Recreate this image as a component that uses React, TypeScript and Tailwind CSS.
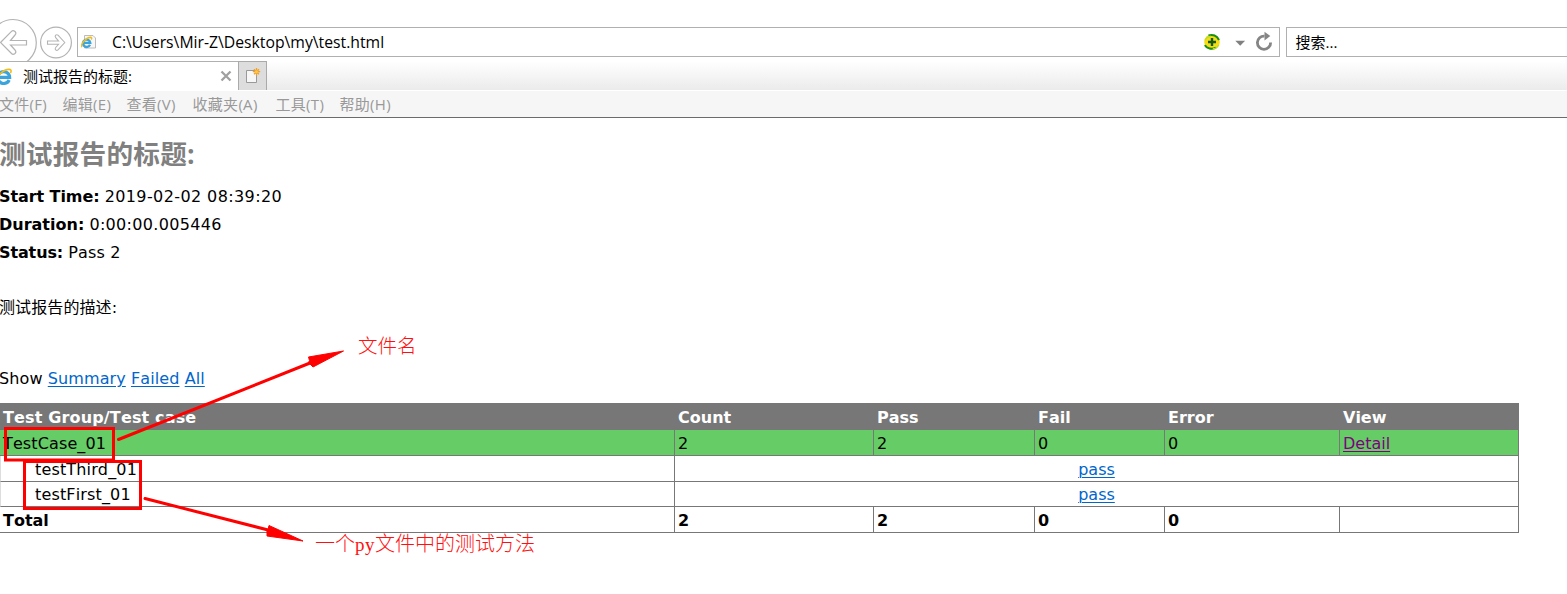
import type { ReactNode } from "react";

const UI = "font-['Open_Sans','Noto_Sans_CJK_SC',sans-serif]";

function PageLogo({ className = "" }: { className?: string }) {
  return (
    <svg viewBox="0 0 16 16" className={className} fill="none">
      <path d="M3.500 1.500h8.500l2.500 2.500v10H3.500z" fill="#f7f7f7" stroke="#b4b4b4" strokeWidth="0.9" />
      <path d="M9 10.800A3.700 3.700 0 1 1 9.300 8.800H3" stroke="#3ba4dc" strokeWidth="2.300" />
      <path d="M1 13.200C-1 10.500 5 3.400 9.800 3.300c1.200.1 1 1.300.4 2.200" stroke="#f3bd19" strokeWidth="1.400" />
    </svg>
  );
}

function IeLogo({ className = "" }: { className?: string }) {
  return (
    <svg viewBox="0 0 16 16" className={className} fill="none">
      <path d="M13.300 11.300A5.600 5.600 0 1 1 13.800 8.900H4" stroke="#3ba4dc" strokeWidth="3" />
      <path d="M1.500 14.800C-2 11.500 7 1 13.500 1.300c2 .1 2 1.800 1 3.600" stroke="#f3bd19" strokeWidth="1.500" />
    </svg>
  );
}

function NavButtons() {
  return (
    <svg width="77" height="61" viewBox="0 0 77 61" fill="none" stroke="#b3b3b3" className="shrink-0">
      <circle cx="13" cy="42.800" r="23.300" strokeWidth="1.200" />
      <path
        d="M.5 42.500 11.500 31.300q1.500-1.500 3.500 0.200 1.700 1.800 0 3.500L10.500 40.500H26.500v4.500H10.500L15 50q1.700 2 0 3.500-2 1.600-3.500 0z"
        strokeWidth="1.200"
      />
      <circle cx="56" cy="42.500" r="15.400" strokeWidth="1.200" />
      <path
        d="M64.800 42.500 58 35.200q-1.200-1-2.300 0-1.100 1.200 0 2.500L58.500 41H47.500v3.300H58.500L55.700 47.500q-1.100 1.300 0 2.400 1.200 1 2.300 0z"
        strokeWidth="1.100"
      />
    </svg>
  );
}

function AddressIcons() {
  return (
    <svg width="76" height="28" viewBox="1203 28 76 28" fill="none" className="ml-auto shrink-0">
      <circle cx="1212" cy="42" r="7.800" fill="#f7dc16" />
      <path d="M1208.500 35.500c4-1.500 8.500 0 10.500 4.500M1205 45c1.500 4 7.500 4.500 11 2.500" stroke="#16901c" strokeWidth="2" />
      <path d="M1205 40.500q2-4.500 6-4M1218.800 45q-2.500 4-6 3.800" stroke="#b9dd31" strokeWidth="1.400" />
      <path d="M1212 38v8M1208 42h8" stroke="#155b11" strokeWidth="2.400" />
      <path d="M1235.300 40.800h9.800l-4.900 5z" fill="#808080" />
      <path d="M1264.500 36.100A6.600 6.600 0 1 0 1270.600 42.500" stroke="#858585" strokeWidth="2.800" />
      <path d="M1264.500 31.800v8.800l5.800-4.600z" fill="#858585" />
    </svg>
  );
}

function Tabs() {
  return (
    <div className="flex h-[29px] bg-linear-to-b from-white to-[#ebebeb]">
      <div className="flex w-[238px] items-center border-t border-[#b0b0b0] bg-white">
        <IeLogo className="-ml-[5px] h-[17px] w-[17px] shrink-0" />
        <span className="ml-[11px] text-[15px] whitespace-nowrap">测试报告的标题:</span>
        <svg width="12" height="12" viewBox="0 0 12 12" className="mr-[6px] ml-auto">
          <path d="m1.500 1.500 9 9m0-9-9 9" stroke="#a0a0a0" strokeWidth="2.300" />
        </svg>
      </div>
      <div className="w-[29px] border border-b-0 border-[#aaa] bg-[#ddd]">
        <svg width="27" height="28" viewBox="239 62 27 28" fill="none">
          <path d="M246.500 70.500h10v12h-10z" fill="#f7f7f7" stroke="#999" />
          <path d="M256.500 68v7.500M252.800 71.700h7.400M254 69.200l5 5m0-5-5 5" stroke="#f2a128" strokeWidth="1.300" />
          <circle cx="256.500" cy="71.700" r="1.500" fill="#ffc74c" />
        </svg>
      </div>
    </div>
  );
}

const MENUS = [
  { label: "文件(F)", width: "w-[63.500px]" },
  { label: "编辑(E)", width: "w-[64px]" },
  { label: "查看(V)", width: "w-[66px]" },
  { label: "收藏夹(A)", width: "w-[83px]" },
  { label: "工具(T)", width: "w-[64px]" },
  { label: "帮助(H)", width: "w-[64px]" },
];

function Link({ children, visited = false }: { children: ReactNode; visited?: boolean }) {
  return (
    <a
      href="#"
      className={`underline decoration-1 underline-offset-2 ${visited ? "text-[#800080]" : "text-[#0066cc]"}`}
    >
      {children}
    </a>
  );
}

const COLS = "grid grid-rows-[minmax(0,1fr)] grid-cols-[675px_199px_161px_130px_175px_179px]";
const CELL = "border-r border-b border-[#777] pl-[3px]";

function Row({ cells, className }: { cells: ReactNode[]; className: string }) {
  return (
    <div className={`${COLS} ${className}`}>
      {cells.map((cell, i) => (
        <div key={i} className={CELL}>
          {cell}
        </div>
      ))}
    </div>
  );
}

function CaseRow({ name, className }: { name: string; className: string }) {
  return (
    <div className={`grid grid-cols-[675px_844px] grid-rows-[minmax(0,1fr)] ${className}`}>
      <div className="border-r border-b border-l border-[#777] border-l-[#ddd] pl-[34px] tracking-[0.150px]">{name}</div>
      <div className="border-r border-b border-[#777] text-center">
        <Link>pass</Link>
      </div>
    </div>
  );
}

function Annotations() {
  return (
    <div className="pointer-events-none absolute inset-0 font-['Liberation_Mono','Noto_Sans_CJK_SC',monospace] font-light text-[#ff1010]">
      <svg width="560" height="594" viewBox="0 0 560 594" fill="none" stroke="#f00" strokeWidth="3">
        <path d="M5.500 428.500h108v31.500h-108zM24.500 461.500h116v47h-116z" />
        <path d="M118.500 439.500 315 361M145 498.500 272 531" strokeLinecap="round" />
        <path d="M343.500 351 308.500 357l1 3.500-1 2 4.500 4.500zM303 541l-34-15.500-1 4-1 1v5.500z" fill="#f00" strokeWidth="1" />
      </svg>
      <span className="absolute top-[336px] left-[358px] text-[19.500px] leading-6 whitespace-nowrap">文件名</span>
      <span className="absolute top-[533px] left-[315px] text-[20px] leading-6 whitespace-nowrap">
        一个<span className="font-['Liberation_Serif',serif] text-[19px] tracking-[0.500px]">py</span>文件中的测试方法
      </span>
    </div>
  );
}

export default function App() {
  return (
    <div className="relative h-[594px] w-[1567px] overflow-hidden bg-white text-black">
      <header className={UI}>
        <div className="flex h-[61px]">
          <NavButtons />
          <div className="mt-[27px] flex h-[30px] w-[1203px] items-center border border-[#b0b0b0]">
            <PageLogo className="ml-[3px] h-4 w-4 shrink-0" />
            <span className="ml-[15px] pt-[2px] text-[15.750px]">C:\Users\Mir-Z\Desktop\my\test.html</span>
            <AddressIcons />
          </div>
          <div className="mt-[27px] ml-[6px] flex h-[30px] flex-1 items-center border border-r-0 border-[#b0b0b0] pl-[8.500px] text-[15px]">
            搜索...
          </div>
        </div>
        <Tabs />
        <nav className="-ml-px flex h-[28px] items-center border-t border-b border-t-white border-b-[#6b6b6b] bg-[#f6f6f6] text-[15px] tracking-[0.300px] text-[#999]">
          {MENUS.map((m) => (
            <span key={m.label} className={`${m.width} shrink-0 whitespace-nowrap`}>
              {m.label}
            </span>
          ))}
        </nav>
      </header>

      <main className="font-['DejaVu_Sans','Noto_Sans_CJK_SC',sans-serif] text-[16px] [font-kerning:none]">
        <h1 className="mt-[16px] -ml-px h-10 font-['Open_Sans','Noto_Sans_CJK_SC',sans-serif] text-[26.670px] leading-10 font-bold tracking-[0.200px] text-[#808080]">
          测试报告的标题:
        </h1>
        <div className="mt-[9px] -ml-px leading-7">
          <p><b className="tracking-[-0.080px]">Start Time:</b> <span className="tracking-[0.400px]">2019-02-02 08:39:20</span></p>
          <p><b>Duration:</b> <span className="tracking-[0.330px]">0:00:00.005446</span></p>
          <p><b className="tracking-[-0.120px]">Status:</b> <span className="tracking-[0.150px]">Pass 2</span></p>
        </div>
        <p className="mt-[27px] -ml-px leading-7 tracking-[0.100px]">测试报告的描述:</p>
        <p className="mt-[43px] -ml-px leading-7 tracking-[0.100px]">Show <Link>Summary</Link> <Link>Failed</Link> <Link>All</Link></p>
        <div className="mt-[10px] w-[1519px]">
          <Row
            className="h-[27px] bg-[#777] leading-[29px] font-bold text-white"
            cells={[<span className="tracking-[0.150px]">Test Group/Test case</span>, "Count", "Pass", "Fail", "Error", "View"]}
          />
          <Row
            className="h-[26px] bg-[#66cc66] leading-[28px]"
            cells={[<span className="tracking-[0.120px]">TestCase_01</span>, "2", "2", "0", "0", <Link visited>Detail</Link>]}
          />
          <CaseRow className="h-[26px] leading-[28px]" name="testThird_01" />
          <CaseRow className="h-[25px] leading-[26px]" name="testFirst_01" />
          <Row className="h-[26px] leading-[28px] font-bold" cells={["Total", "2", "2", "0", "0", ""]} />
        </div>
      </main>
      <Annotations />
    </div>
  );
}
